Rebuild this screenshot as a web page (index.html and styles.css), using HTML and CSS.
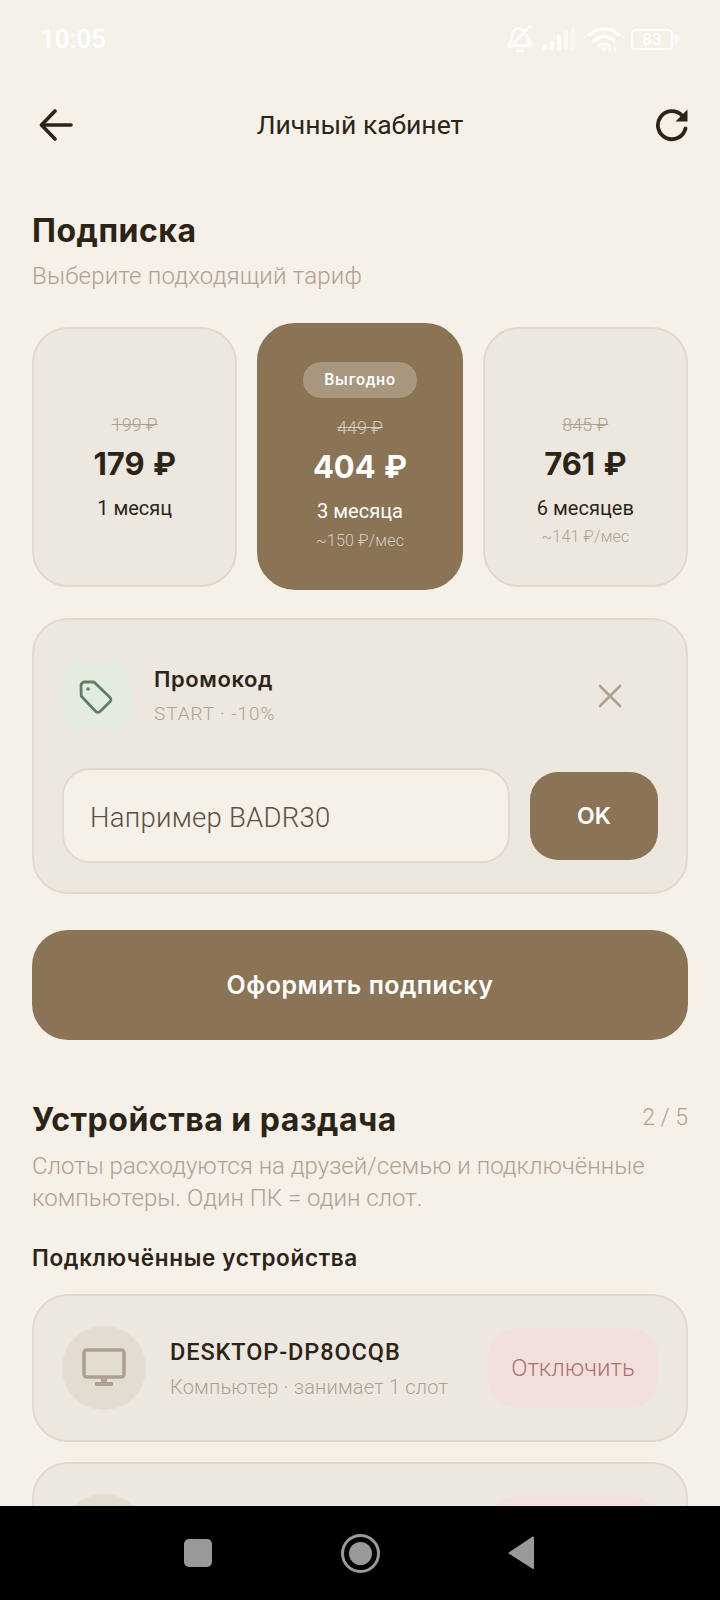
FILE: index.html
```html
<!DOCTYPE html>
<html lang="ru">
<head>
<meta charset="utf-8">
<title>Личный кабинет</title>
<link rel="stylesheet" href="styles.css">
</head>
<body>
<div class="screen">
  <div class="status">
    <span class="clock">10:05</span>
    <div class="status-icons">
      <svg class="ic-bell" viewBox="0 0 26 28" width="26" height="28" fill="none" stroke="#fff" stroke-width="2.400" stroke-linecap="round" stroke-linejoin="round"><path d="M3.500 17c1.500-2 1.500-5 1.800-7.500C5.800 5.500 8.500 3.500 11.500 3.500c2.500 0 4 1 5.300 2.500M19.500 10c.3 3 1.500 6 5 10.500H1.500"/><path d="M23 1.500 3 22"/><path d="M10 26h6"/></svg>
      <svg class="ic-signal" viewBox="0 0 34 24" width="34" height="24" fill="#fff"><rect x="0" y="18" width="4" height="5" rx="1.500"/><rect x="7" y="14" width="4" height="9" rx="1"/><rect x="14" y="8" width="4" height="15" rx="1"/><rect x="21" y="4" width="4" height="19" rx="1" opacity=".55"/><rect x="28" y="0" width="4" height="23" rx="1" opacity=".4"/></svg>
      <svg class="ic-wifi" viewBox="0 0 34 26" width="34" height="26" fill="none" stroke="#fff" stroke-width="3" stroke-linecap="round"><path d="M2 9c8.500-8 21.500-8 30 0"/><path d="M7 14.500c6-5.500 14-5.500 20 0"/><path d="M12 19.500c3-2.500 7-2.500 10 0"/><circle cx="17" cy="23" r="2" fill="#fff" stroke="none"/><path d="M24 20v6l-3-3zM27 20v6l3-3z" fill="#fff" stroke="none"/></svg>
      <div class="battery"><span class="battery-body">83</span><span class="battery-cap"></span></div>
    </div>
  </div>

  <header class="topbar">
    <svg class="ic-back" viewBox="0 0 34 34" width="34" height="34" fill="none" stroke="#2c2416" stroke-width="3.600" stroke-linecap="round" stroke-linejoin="round"><path d="M32 17H3"/><path d="M16 3 2.500 17 16 31"/></svg>
    <h1 class="topbar-title">Личный кабинет</h1>
    <svg class="ic-refresh" viewBox="0 0 34 34" width="34" height="34" fill="none" stroke="#2c2416" stroke-width="3.800" stroke-linecap="round"><path d="M30.500 20.500A14 14 0 1 1 27 7.500"/><path d="M32.500 1.500V13.500H20.500z" fill="#2c2416" stroke="none"/></svg>
  </header>

  <main class="content">
    <section class="subscription">
      <h2 class="section-title">Подписка</h2>
      <p class="section-sub">Выберите подходящий тариф</p>

      <div class="plans">
        <div class="plan">
          <span class="plan-old">199 ₽</span>
          <span class="plan-price">179 ₽</span>
          <span class="plan-term">1 месяц</span>
        </div>
        <div class="plan plan-active">
          <span class="plan-badge">Выгодно</span>
          <span class="plan-old">449 ₽</span>
          <span class="plan-price">404 ₽</span>
          <span class="plan-term">3 месяца</span>
          <span class="plan-month">~150 ₽/мес</span>
        </div>
        <div class="plan">
          <span class="plan-old">845 ₽</span>
          <span class="plan-price">761 ₽</span>
          <span class="plan-term">6 месяцев</span>
          <span class="plan-month">~141 ₽/мес</span>
        </div>
      </div>

      <div class="promo">
        <div class="promo-head">
          <div class="promo-icon">
            <svg viewBox="0 0 34 34" width="34" height="34" fill="none" stroke="#5f7f66" stroke-width="2.800" stroke-linejoin="round" stroke-linecap="round"><path d="M2 5.500A3.500 3.500 0 0 1 5.500 2H15l16 15.500a3 3 0 0 1 0 4.200L21 31.500a3 3 0 0 1-4.200 0L2.200 16z"/><circle cx="9" cy="9" r="1.800" fill="#5f7f66" stroke="none"/></svg>
          </div>
          <div class="promo-text">
            <span class="promo-title">Промокод</span>
            <span class="promo-code">START · -10%</span>
          </div>
          <svg class="ic-close" viewBox="0 0 24 24" width="24" height="24" fill="none" stroke="#b0a090" stroke-width="2.600" stroke-linecap="round"><path d="M2 2l20 20M22 2 2 22"/></svg>
        </div>
        <div class="promo-form">
          <div class="promo-input">Например BADR30</div>
          <div class="promo-ok">OK</div>
        </div>
      </div>

      <div class="cta">Оформить подписку</div>
    </section>

    <section class="devices">
      <div class="devices-head">
        <h2 class="section-title">Устройства и раздача</h2>
        <span class="devices-count">2 / 5</span>
      </div>
      <p class="section-sub section-sub-wide">Слоты расходуются на друзей/семью и подключённые компьютеры. Один ПК = один слот.</p>
      <h3 class="devices-label">Подключённые устройства</h3>

      <div class="device">
        <div class="device-icon">
          <svg viewBox="0 0 44 40" width="44" height="40" fill="none"><rect x="2" y="2" width="40" height="27" rx="3" stroke="#b0a090" stroke-width="3.600"/><path d="M19 30h6v5h-6z" fill="#b0a090"/><rect x="13" y="34" width="18" height="4" rx="1" fill="#b0a090"/></svg>
        </div>
        <div class="device-text">
          <span class="device-name">DESKTOP-DP8OCQB</span>
          <span class="device-meta">Компьютер · занимает 1 слот</span>
        </div>
        <div class="device-off">Отключить</div>
      </div>
      <div class="device">
        <div class="device-icon"></div>
        <div class="device-text"></div>
        <div class="device-off"></div>
      </div>
    </section>
  </main>

  <nav class="navbar">
    <span class="nav-square"></span>
    <span class="nav-circle"><span class="nav-dot"></span></span>
    <svg class="nav-back" viewBox="0 0 28 34" width="28" height="34"><path d="M27 1.500V32a1 1 0 0 1-1.600.8L1 17 25.400.8A1 1 0 0 1 27 1.500z" fill="#999"/></svg>
  </nav>
</div>
</body>
</html>
```

FILE: styles.css
```css
* { box-sizing: border-box; }

html, body {
  margin: 0;
  padding: 0;
}

body {
  font-family: Roboto, "Liberation Sans", sans-serif;
  background: #f5f0e8;
  color: #2c2416;
}

h1, h2, h3, p { margin: 0; }

.screen {
  width: 720px;
  height: 1600px;
  display: flex;
  flex-direction: column;
  overflow: hidden;
}

/* status bar */
.status {
  height: 80px;
  flex: none;
  display: flex;
  align-items: center;
  justify-content: space-between;
  padding: 0 42px 2px 40px;
  color: #fff;
}

.clock {
  font-size: 26px;
  font-weight: 500;
}

.status-icons {
  display: flex;
  align-items: center;
  gap: 10px;
}

.battery {
  display: flex;
  align-items: center;
  gap: 2px;
}

.battery-body {
  width: 42px;
  height: 21px;
  border: 2px solid #fff;
  border-radius: 5px;
  font-size: 17px;
  line-height: 17px;
  font-weight: 500;
  text-align: center;
}

.battery-cap {
  width: 3px;
  height: 9px;
  background: #fff;
  border-radius: 0 2px 2px 0;
}

/* top bar */
.topbar {
  height: 90px;
  flex: none;
  display: flex;
  align-items: center;
  justify-content: space-between;
  padding: 0 31px 2px 39px;
}

.topbar-title {
  font-size: 26.500px;
  font-weight: 400;
  margin-left: -8px;
}

.ic-back,
.ic-refresh { margin-top: 2px; }

/* page body */
.content {
  flex: 1;
  min-height: 0;
  overflow: hidden;
  padding: 0 32px;
}

.subscription {
  padding-top: 41px;
}

.section-title {
  font-family: Inter, Roboto, sans-serif;
  font-size: 32px;
  line-height: 40px;
  font-weight: 700;
  letter-spacing: .5px;
}

.section-sub {
  font-size: 24px;
  line-height: 32px;
  font-weight: 300;
  letter-spacing: .2px;
  color: #b0a090;
  margin-top: 9px;
}

.section-sub-wide {
  margin-top: 10px;
  letter-spacing: 0;
}

/* tariff cards */
.plans {
  display: grid;
  grid-template-columns: repeat(3, 1fr);
  gap: 20px;
  align-items: center;
  margin-top: 31px;
}

.plan {
  height: 260px;
  display: flex;
  flex-direction: column;
  align-items: center;
  justify-content: flex-start;
  padding-top: 84px;
  background: #ece8e0;
  border: 2px solid #e0d9cc;
  border-radius: 36px;
}

.plan-active {
  height: 267px;
  padding-top: 37px;
  background: #8b7355;
  border-color: #8b7355;
  border-radius: 38px;
  color: #fff;
}

.plan-badge {
  height: 36px;
  line-height: 36px;
  padding: 0 21px;
  border-radius: 18px;
  background: rgba(255, 255, 255, .25);
  font-size: 16px;
  font-weight: 500;
  letter-spacing: .8px;
  margin-bottom: 18px;
}

.plan-old {
  font-size: 18px;
  line-height: 24px;
  font-weight: 300;
  color: #b0a090;
  text-decoration: line-through;
}

.plan-active .plan-old { color: rgba(255, 255, 255, .6); }

.plan-price {
  font-family: Inter, Roboto, sans-serif;
  font-size: 31px;
  line-height: 44px;
  font-weight: 700;
  word-spacing: 1px;
  margin-top: 5px;
}

.plan-term {
  font-size: 20px;
  line-height: 26px;
  font-weight: 400;
  margin-top: 9px;
}

.plan-month {
  font-size: 16px;
  line-height: 22px;
  font-weight: 300;
  letter-spacing: .2px;
  color: #b0a090;
  margin-top: 5px;
}

.plan-active .plan-month {
  margin-top: 6px;
  color: rgba(255, 255, 255, .65);
}

/* promo code card */
.promo {
  margin-top: 28px;
  padding: 43px 28px 29px;
  background: #ece8e0;
  border: 2px solid #e0d9cc;
  border-radius: 36px;
}

.promo-head {
  display: flex;
  align-items: center;
}

.promo-icon {
  width: 68px;
  height: 68px;
  flex: none;
  display: flex;
  align-items: center;
  justify-content: center;
  border-radius: 20px;
  background: #e4ece0;
}

.promo-text {
  flex: 1;
  display: flex;
  flex-direction: column;
  margin-left: 24px;
  padding-bottom: 3px;
}

.promo-title {
  font-family: Inter, Roboto, sans-serif;
  font-size: 22px;
  line-height: 30px;
  font-weight: 600;
  letter-spacing: .6px;
}

.promo-code {
  font-size: 19px;
  line-height: 26px;
  font-weight: 300;
  letter-spacing: .9px;
  color: #b0a090;
  margin-top: 7px;
}

.ic-close {
  margin-right: 36px;
  margin-bottom: 2px;
}

.promo-form {
  display: flex;
  align-items: center;
  gap: 20px;
  margin-top: 37px;
}

.promo-input {
  flex: 1;
  height: 95px;
  display: flex;
  align-items: center;
  padding: 3px 0 0 26px;
  background: #f5f0e8;
  border: 2px solid #e0d9cc;
  border-radius: 28px;
  font-size: 27.500px;
  font-weight: 300;
  letter-spacing: .25px;
  color: #5c5040;
}

.promo-ok {
  width: 128px;
  height: 88px;
  display: flex;
  align-items: center;
  justify-content: center;
  background: #8b7355;
  border-radius: 28px;
  color: #fff;
  font-family: Inter, Roboto, sans-serif;
  font-size: 23px;
  font-weight: 600;
}

/* main action */
.cta {
  margin-top: 36px;
  height: 110px;
  display: flex;
  align-items: center;
  justify-content: center;
  background: #8b7355;
  border-radius: 36px;
  color: #fff;
  font-family: Inter, Roboto, sans-serif;
  font-size: 25px;
  font-weight: 600;
  letter-spacing: .5px;
}

/* devices */
.devices {
  padding-top: 60px;
}

.devices-head {
  display: flex;
  align-items: flex-start;
  justify-content: space-between;
}

.devices-count {
  font-size: 23px;
  line-height: 36px;
  font-weight: 300;
  color: #b0a090;
}

.devices-label {
  margin-top: 28px;
  font-family: Inter, Roboto, sans-serif;
  font-size: 22.500px;
  line-height: 32px;
  font-weight: 600;
  letter-spacing: .65px;
}

.device {
  margin-top: 20px;
  height: 148px;
  display: flex;
  align-items: center;
  padding: 0 28px;
  background: #ece8e0;
  border: 2px solid #e0d9cc;
  border-radius: 36px;
}

.device-icon {
  width: 84px;
  height: 84px;
  flex: none;
  display: flex;
  align-items: center;
  justify-content: center;
  border-radius: 50%;
  background: #e3ddd0;
}

.device-text {
  flex: 1;
  display: flex;
  flex-direction: column;
  margin-left: 24px;
}

.device-name {
  font-size: 23.500px;
  line-height: 30px;
  font-weight: 500;
  letter-spacing: .9px;
}

.device-meta {
  font-size: 20px;
  line-height: 26px;
  font-weight: 300;
  letter-spacing: .2px;
  color: #b0a090;
  margin-top: 7px;
}

.device-off {
  width: 170px;
  height: 80px;
  display: flex;
  align-items: center;
  justify-content: center;
  border-radius: 28px;
  background: #f2e0dd;
  color: #b07070;
  font-size: 24px;
  font-weight: 300;
}

/* system navigation */
.navbar {
  flex: none;
  height: 94px;
  background: #000;
  display: flex;
  align-items: center;
  padding: 0 0 0 184px;
}

.nav-square {
  width: 28px;
  height: 28px;
  border-radius: 5px;
  background: #999;
}

.nav-circle {
  width: 39px;
  height: 39px;
  margin-left: 129px;
  border: 3px solid #999;
  border-radius: 50%;
  display: flex;
  align-items: center;
  justify-content: center;
}

.nav-dot {
  width: 23px;
  height: 23px;
  border-radius: 50%;
  background: #999;
}

.nav-back { margin-left: 127px; }
```
